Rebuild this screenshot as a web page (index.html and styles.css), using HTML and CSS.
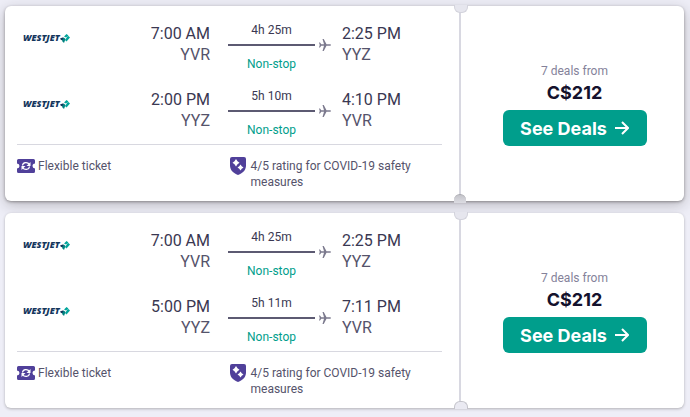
FILE: index.html
```html
<!DOCTYPE html>
<html lang="en">

<head>
    <meta charset="UTF-8">
    <meta name="viewport" content="width=device-width, initial-scale=1.0">
    <title>Flights Vancouver - Toronto</title>
    <link rel="stylesheet" href="styles.css">
</head>

<body>
    <!-- Shared icons -->
    <svg class="sprite" aria-hidden="true">
        <symbol id="leaf" viewBox="0 0 20 18">
            <path fill="#00a59b" d="M8 5l5-5 4 3-5 4zM15 5l2-1 3 3-7 8-3-3z" />
            <path fill="#14365d" d="M0 9l5-2 4 1-2 5-5-1z" />
            <path fill="#00827f" d="M7 7l4 3-3 8-4-4z" />
        </symbol>
        <symbol id="plane" viewBox="0 0 24 24">
            <path fill="#7c7a8e" d="M24 12c0-1-1-1.500-2.500-1.500H15L9.500 0H7l3 10.500H4.500L2 7H0l1.500 5L0 17h2l2.500-3.500H10L7 24h2.500L15 13.500h6.500c1.500 0 2.500-.5 2.500-1.500z" />
        </symbol>
        <symbol id="ticket" viewBox="0 0 36 28">
            <path fill="#50409a" d="M3 0h30a3 3 0 0 1 3 3v6a5 5 0 0 0 0 10v6a3 3 0 0 1-3 3H3a3 3 0 0 1-3-3v-6a5 5 0 0 0 0-10V3a3 3 0 0 1 3-3z" />
            <path fill="none" stroke="#fff" stroke-width="2.500" d="M11 13c1-7 10-8 14-2M25 15c-1 7-10 8-14 2" />
            <path fill="#fff" d="M27 6v8h-8zM9 22v-8h8z" />
        </symbol>
        <symbol id="shield" viewBox="0 0 32 36">
            <path fill="#50409a" d="M4 0h24a4 4 0 0 1 4 4v13c0 9-6 15-16 19C6 32 0 26 0 17V4a4 4 0 0 1 4-4z" />
            <path fill="#fff" d="M12 4l3 4.500L19 11.500 15 14.500 12 19l-3-4.500L5 11.500 9 8.500zM21 15l2.500 3.500L27 21l-3.500 2.500L21 27l-2.500-3.500L15 21l3.500-2.500z" />
        </symbol>
        <symbol id="arrow" viewBox="0 0 14 14">
            <path fill="none" stroke="#fff" stroke-width="2" d="M0 7h12M7 1l6 6-6 6" />
        </symbol>
    </svg>

    <main class="results">
        <article class="ticket raised">
            <div class="details">
                <div class="leg">
                    <div class="airline">WESTJET<svg><use href="#leaf" /></svg></div>
                    <div class="stop depart"><span class="time">7:00 AM</span><span>YVR</span></div>
                    <div class="flight">
                        <div class="duration">4h 25m</div>
                        <div class="track"><span class="line"></span><svg><use href="#plane" /></svg></div>
                        <div class="nonstop">Non-stop</div>
                    </div>
                    <div class="stop arrive"><span class="time">2:25 PM</span><span>YYZ</span></div>
                </div>
                <div class="leg">
                    <div class="airline">WESTJET<svg><use href="#leaf" /></svg></div>
                    <div class="stop depart"><span class="time">2:00 PM</span><span>YYZ</span></div>
                    <div class="flight">
                        <div class="duration">5h 10m</div>
                        <div class="track"><span class="line"></span><svg><use href="#plane" /></svg></div>
                        <div class="nonstop">Non-stop</div>
                    </div>
                    <div class="stop arrive"><span class="time">4:10 PM</span><span>YVR</span></div>
                </div>
                <div class="notes">
                    <div class="note"><svg class="icon-ticket"><use href="#ticket" /></svg><span>Flexible ticket</span></div>
                    <div class="note"><svg class="icon-shield"><use href="#shield" /></svg><span>4/5 rating for COVID-19 safety measures</span></div>
                </div>
            </div>
            <div class="deal">
                <span class="from">7 deals from</span>
                <span class="price">C$212</span>
                <button type="button">See Deals<svg><use href="#arrow" /></svg></button>
            </div>
        </article>

        <article class="ticket">
            <div class="details">
                <div class="leg">
                    <div class="airline">WESTJET<svg><use href="#leaf" /></svg></div>
                    <div class="stop depart"><span class="time">7:00 AM</span><span>YVR</span></div>
                    <div class="flight">
                        <div class="duration">4h 25m</div>
                        <div class="track"><span class="line"></span><svg><use href="#plane" /></svg></div>
                        <div class="nonstop">Non-stop</div>
                    </div>
                    <div class="stop arrive"><span class="time">2:25 PM</span><span>YYZ</span></div>
                </div>
                <div class="leg">
                    <div class="airline">WESTJET<svg><use href="#leaf" /></svg></div>
                    <div class="stop depart"><span class="time">5:00 PM</span><span>YYZ</span></div>
                    <div class="flight">
                        <div class="duration">5h 11m</div>
                        <div class="track"><span class="line"></span><svg><use href="#plane" /></svg></div>
                        <div class="nonstop">Non-stop</div>
                    </div>
                    <div class="stop arrive"><span class="time">7:11 PM</span><span>YVR</span></div>
                </div>
                <div class="notes">
                    <div class="note"><svg class="icon-ticket"><use href="#ticket" /></svg><span>Flexible ticket</span></div>
                    <div class="note"><svg class="icon-shield"><use href="#shield" /></svg><span>4/5 rating for COVID-19 safety measures</span></div>
                </div>
            </div>
            <div class="deal">
                <span class="from">7 deals from</span>
                <span class="price">C$212</span>
                <button type="button">See Deals<svg><use href="#arrow" /></svg></button>
            </div>
        </article>
    </main>
</body>

</html>
```
FILE: styles.css
```css
* {
    box-sizing: border-box;
}

body {
    font-family: Roboto, "Liberation Sans", sans-serif;
    font-size: 12px;
    line-height: 16px;
    margin: 0;
    color: #55536b;
    background-color: #eeeef7;
}

.sprite {
    display: none;
}

.results {
    display: flex;
    flex-direction: column;
    gap: 12px;
    padding: 6px 6px 9px 5px;
}

.ticket {
    display: flex;
    background-color: #fff;
    border-radius: 6px;
    box-shadow: 0 1px 3px rgba(37, 32, 31, 0.3);
}

.ticket.raised {
    box-shadow: 0 1px 3px rgba(37, 32, 31, 0.4), 0 4px 14px rgba(37, 32, 31, 0.25);
}

.details {
    flex: 1;
    padding: 16px 17px 11px 12px;
}

.leg {
    display: grid;
    grid-template-columns: 60px 1fr 103px 111px;
    padding-bottom: 16px;
}

.leg:nth-child(2) {
    padding-bottom: 6px;
}

.airline {
    display: flex;
    align-items: center;
    height: 32px;
    padding-left: 6px;
    font-family: "Open Sans", sans-serif;
    font-size: 9px;
    font-style: italic;
    font-weight: 800;
    color: #14365d;
}

.airline svg {
    flex: none;
    width: 10px;
    height: 9px;
}

.stop {
    display: flex;
    flex-direction: column;
    padding-top: 1px;
    font-size: 16px;
    line-height: 21px;
}

.time {
    color: #3a3852;
}

.depart {
    padding-right: 18px;
    text-align: right;
}

.arrive {
    padding-left: 11px;
}

.duration,
.nonstop {
    width: 87px;
    text-align: center;
    color: #3a3852;
}

.nonstop {
    color: #009e8c;
}

.track {
    display: flex;
    align-items: center;
    justify-content: space-between;
    height: 12px;
    margin: 1px 0 5px;
}

.line {
    width: 87px;
    height: 2px;
    background-color: #5c5a72;
}

.track svg {
    width: 12px;
    height: 12px;
}

.notes {
    display: grid;
    grid-template-columns: 1fr 1fr;
    padding-top: 13px;
    border-top: 1px solid #d8d8e0;
}

.note {
    display: flex;
    gap: 3px;
}

.note:last-child {
    gap: 5px;
}

.note svg {
    flex: none;
}

.icon-ticket {
    width: 18px;
    height: 14px;
    margin-top: 1px;
}

.icon-shield {
    width: 16px;
    height: 18px;
    margin-top: -1px;
}

.deal {
    position: relative;
    display: flex;
    flex-direction: column;
    align-items: center;
    justify-content: center;
    width: 225px;
    padding: 2px 0 0 4px;
    border-left: 2px solid #d8d8e1;
}

/* Perforation cut-outs at both ends of the divider */
.deal::before,
.deal::after {
    content: "";
    position: absolute;
    left: -7px;
    width: 12px;
    height: 7px;
    background-color: #e6e6ee;
    border: 1px solid #d3d3dc;
}

.deal::before {
    top: -1px;
    border-top: none;
    border-radius: 0 0 6px 6px;
}

.deal::after {
    bottom: -1px;
    background-color: #eaeaf2;
    border-color: #c4c4cb;
    border-bottom: none;
    border-radius: 6px 6px 0 0;
}

.raised .deal::after {
    bottom: -2px;
    height: 8px;
    background: linear-gradient(#c4c4ca, #dcdce2);
    border: none;
    border-top: 1px solid #a8a8ae;
}

.from {
    margin-bottom: 1px;
    color: #84829a;
}

.price {
    margin-bottom: 5px;
    font-family: Inter, sans-serif;
    font-size: 18px;
    font-weight: 700;
    line-height: 25px;
    color: #14122d;
}

button {
    display: flex;
    align-items: center;
    justify-content: center;
    gap: 8px;
    width: 144px;
    height: 36px;
    padding: 0;
    font-family: Inter, sans-serif;
    font-size: 18px;
    font-weight: 700;
    color: #fff;
    background-color: #009e8c;
    border: none;
    border-radius: 6px;
    cursor: pointer;
}

button svg {
    width: 14px;
    height: 14px;
}
```
